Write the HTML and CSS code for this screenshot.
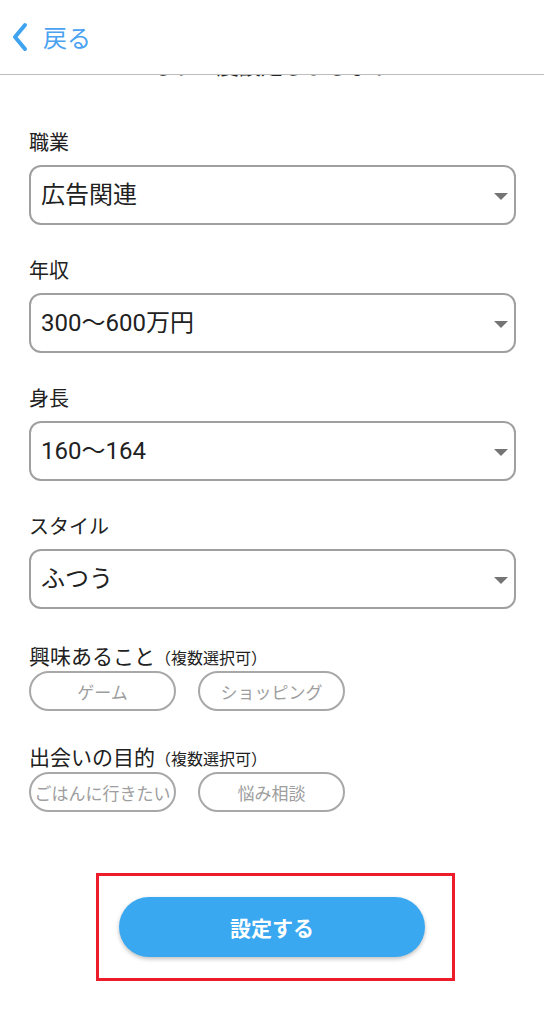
FILE: index.html
```html
<!DOCTYPE html>
<html lang="ja">
<head>
<meta charset="utf-8">
<title>設定</title>
<link rel="stylesheet" href="styles.css">
</head>
<body>
<header class="topbar">
  <a class="back" href="#">
    <svg class="chev" width="18" height="30" viewBox="0 0 18 30"><path d="M14 3 L4 15 L14 27" fill="none" stroke="#3fa3ef" stroke-width="4" stroke-linecap="round" stroke-linejoin="round"/></svg>
    <span class="back-text">戻る</span>
  </a>
</header>
<div class="cutline"><div class="cut-text">もう一度設定しましょう</div></div>
<main class="form">
  <section class="field">
    <div class="label">職業</div>
    <div class="select"><span class="val">広告関連</span><span class="arrow"></span></div>
  </section>
  <section class="field">
    <div class="label">年収</div>
    <div class="select"><span class="val">300〜600万円</span><span class="arrow"></span></div>
  </section>
  <section class="field">
    <div class="label">身長</div>
    <div class="select"><span class="val">160〜164</span><span class="arrow"></span></div>
  </section>
  <section class="field">
    <div class="label">スタイル</div>
    <div class="select"><span class="val">ふつう</span><span class="arrow"></span></div>
  </section>
  <section class="multi">
    <div class="label2">興味あること<span class="small">（複数選択可）</span></div>
    <div class="chips"><span class="chip">ゲーム</span><span class="chip">ショッピング</span></div>
  </section>
  <section class="multi">
    <div class="label2">出会いの目的<span class="small">（複数選択可）</span></div>
    <div class="chips"><span class="chip">ごはんに行きたい</span><span class="chip">悩み相談</span></div>
  </section>
  <div class="highlight"><button class="submit">設定する</button></div>
</main>
</body>
</html>
```
FILE: styles.css
```css
* { box-sizing: border-box; }
html, body { margin: 0; padding: 0; background: #fff; }
body { font-family: Roboto, "Noto Sans CJK JP", sans-serif; color: #212121; width: 544px; }
.topbar { height: 75px; border-bottom: 1px solid #bdbdbd; display: flex; align-items: flex-start; padding: 21px 0 0 11px; }
.back { display: flex; align-items: center; text-decoration: none; }
.chev { display: block; }
.back-text { font-family: "Noto Sans CJK JP", sans-serif; font-size: 24px; line-height: 32px; color: #4aa2f2; margin-left: 14px; margin-top: 0; }
.cutline { height: 4px; overflow: hidden; display: flex; justify-content: center; }
.cut-text { font-family: "Noto Sans CJK JP", sans-serif; font-size: 22px; line-height: 30px; margin-top: -26px; color: #222; white-space: nowrap; }
.form { padding: 50px 28px 0 29px; }
.field { margin-bottom: 32px; }
.label { font-family: "Noto Sans CJK JP", sans-serif; font-size: 20px; line-height: 26px; height: 26px; margin-bottom: 10px; color: #212121; }
.select { height: 60px; border: 2px solid #a0a0a0; border-radius: 12px; display: flex; align-items: center; justify-content: space-between; padding: 0 6px 0 10px; }
.val { font-size: 24px; line-height: 30px; color: #212121; }
.arrow { width: 0; height: 0; border-left: 7px solid transparent; border-right: 7px solid transparent; border-top: 7px solid #757575; margin-top: 2px; }
.multi { margin-top: 34px; }
.multi + .multi { margin-top: 33px; }
.label2 { display: flex; align-items: baseline; height: 24px; font-family: "Noto Sans CJK JP", sans-serif; font-size: 21px; line-height: 24px; margin-bottom: 4px; color: #212121; white-space: nowrap; }
.small { font-size: 16px; line-height: 24px; }
.chips { display: flex; gap: 22px; }
.chip { width: 147px; height: 40px; border: 2px solid #a8a8a8; border-radius: 20px; display: flex; align-items: center; justify-content: center; font-family: "Noto Sans CJK JP", sans-serif; font-size: 17px; color: #9e9e9e; white-space: nowrap; }
.highlight { margin: 61px 0 0 67px; width: 359px; height: 108px; border: 3px solid #ec1c2b; padding: 21px 0 0 20px; }
.submit { display: block; width: 306px; height: 60px; border: none; border-radius: 30px; background: #3aa8f1; color: #fff; font-family: "Noto Sans CJK JP", sans-serif; font-weight: 700; font-size: 21px; box-shadow: 0 2px 4px rgba(0,0,0,0.25); padding: 0; cursor: pointer; }
```
